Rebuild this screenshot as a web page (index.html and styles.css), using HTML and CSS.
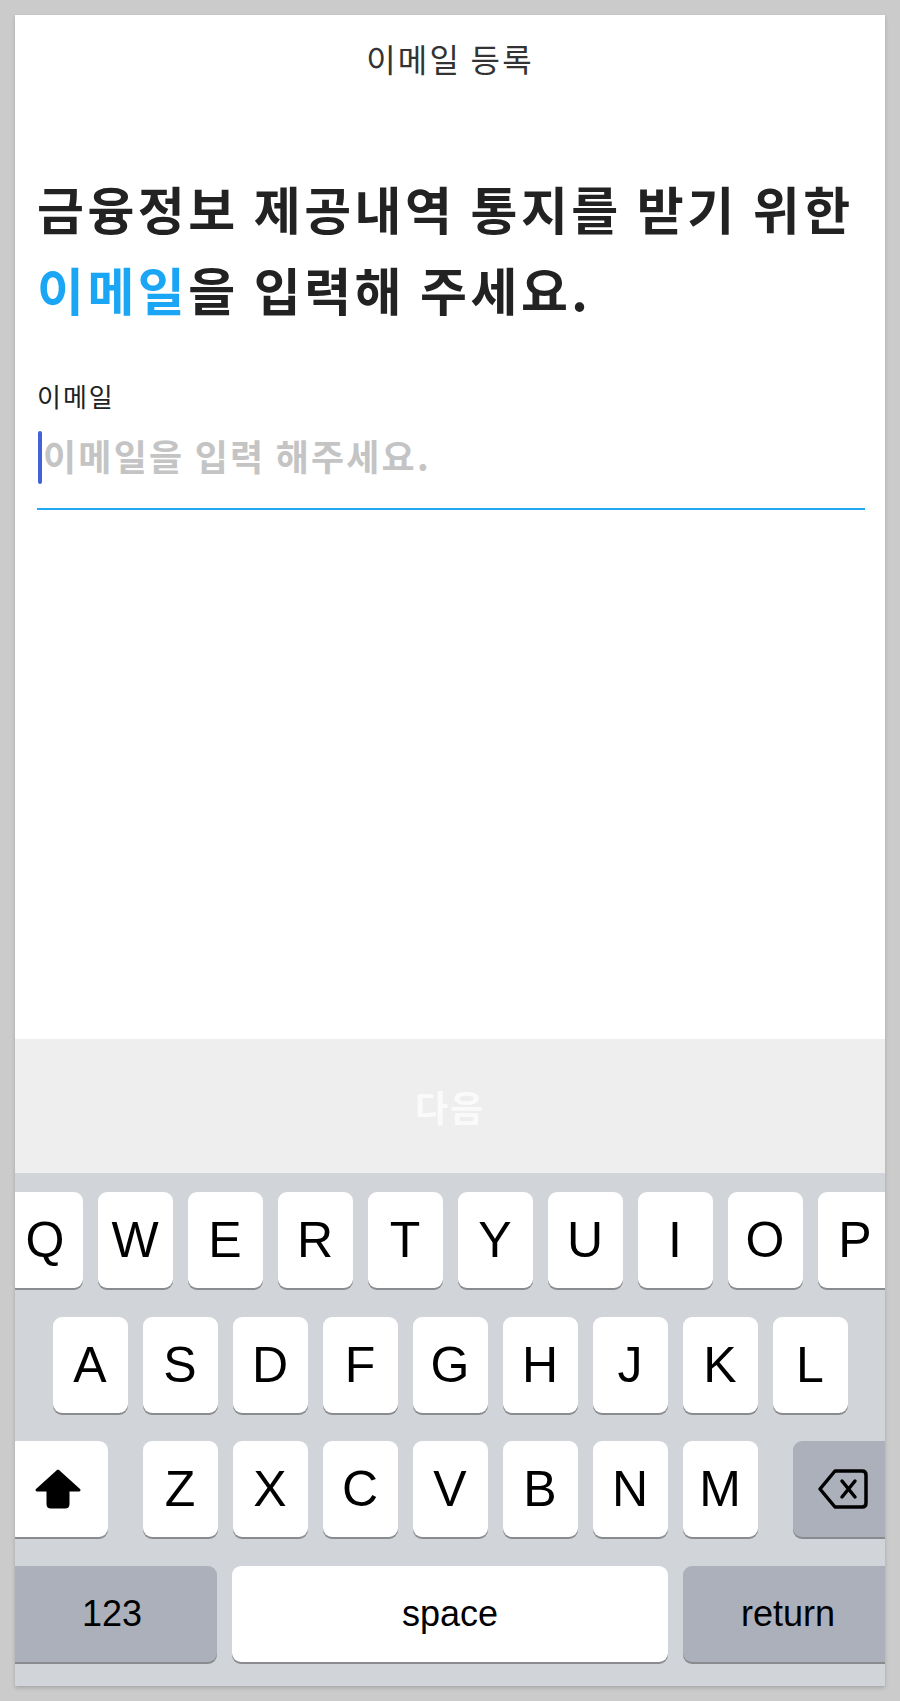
FILE: index.html
```html
<!DOCTYPE HTML>
<html>
    <head>
        <title>이메일 등록</title>
        <meta charset="utf-8">
        <link rel="stylesheet" href="styles.css">
    </head>

    <body>
        <div class="screen">
            <div class="topbar">이메일 등록</div>

            <div class="content">
                <h1 class="headline">금융정보 제공내역 통지를 받기 위한<br><span class="accent">이메일</span>을 입력해 주세요.</h1>

                <div class="field-label">이메일</div>
                <div class="field">
                    <span class="caret"></span>
                    <span class="placeholder">이메일을 입력 해주세요.</span>
                </div>
            </div>

            <div class="spacer"></div>

            <div class="next-bar">다음</div>

            <div class="keyboard">
                <div class="kb-row">
                    <div class="key">Q</div>
                    <div class="key">W</div>
                    <div class="key">E</div>
                    <div class="key">R</div>
                    <div class="key">T</div>
                    <div class="key">Y</div>
                    <div class="key">U</div>
                    <div class="key">I</div>
                    <div class="key">O</div>
                    <div class="key">P</div>
                </div>
                <div class="kb-row">
                    <div class="key">A</div>
                    <div class="key">S</div>
                    <div class="key">D</div>
                    <div class="key">F</div>
                    <div class="key">G</div>
                    <div class="key">H</div>
                    <div class="key">J</div>
                    <div class="key">K</div>
                    <div class="key">L</div>
                </div>
                <div class="kb-row">
                    <div class="key key-shift">
                        <svg width="48" height="42" viewBox="0 0 48 42">
                            <path d="M24 3 L3 22 L14 22 L14 36 Q14 39 17 39 L31 39 Q34 39 34 36 L34 22 L45 22 Z" fill="#000" stroke="#000" stroke-width="3" stroke-linejoin="round"/>
                        </svg>
                    </div>
                    <div class="key">Z</div>
                    <div class="key">X</div>
                    <div class="key">C</div>
                    <div class="key">V</div>
                    <div class="key">B</div>
                    <div class="key">N</div>
                    <div class="key">M</div>
                    <div class="key key-gray key-back">
                        <svg width="52" height="42" viewBox="0 0 52 42">
                            <path d="M18 3 L45 3 Q49 3 49 7 L49 35 Q49 39 45 39 L18 39 L3 21 Z" fill="none" stroke="#000" stroke-width="3.5" stroke-linejoin="round"/>
                            <path d="M25 13 L38 29 M38 13 L25 29" stroke="#000" stroke-width="3.5" stroke-linecap="round"/>
                        </svg>
                    </div>
                </div>
                <div class="kb-row">
                    <div class="key key-gray key-wide key-small">123</div>
                    <div class="key key-space key-small">space</div>
                    <div class="key key-gray key-wide key-small">return</div>
                </div>
            </div>
        </div>
    </body>
</html>
```

FILE: styles.css
```css
body {
    margin: 0;
    padding: 15px;
    background-color: #cbcbcb;
    font-family: "Noto Sans CJK KR", "Noto Sans", sans-serif;
}
.screen {
    height: 1671px;
    background-color: white;
    display: flex;
    flex-direction: column;
    overflow: hidden;
    box-shadow: 0 2px 4px rgba(0, 0, 0, 0.18);
}
.topbar {
    height: 86px;
    line-height: 86px;
    text-align: center;
    font-size: 32px;
    letter-spacing: 2.2px;
    color: #333;
}
.content {
    padding: 0 20px 0 22px;
}
.headline {
    margin: 67px 0 0;
    font-size: 51px;
    line-height: 81px;
    font-weight: 700;
    letter-spacing: 3.5px;
    color: #222;
}
.accent {
    color: #1ba6f5;
}
.field-label {
    margin-top: 48px;
    font-size: 26px;
    line-height: 36px;
    letter-spacing: 2px;
    color: #222;
}
.field {
    display: flex;
    align-items: center;
    padding: 17px 0 24px;
    border-bottom: 2px solid #20a8f4;
}
.caret {
    width: 4px;
    height: 53px;
    border-radius: 2px;
    background-color: #4262d8;
    margin-left: 1px;
}
.placeholder {
    margin-left: 1px;
    margin-bottom: 5px;
    font-size: 36px;
    font-weight: 700;
    letter-spacing: 2.2px;
    color: #c4c4c4;
    line-height: 48px;
}
.spacer {
    flex: 1;
}
.next-bar {
    height: 134px;
    background-color: #eeeeee;
    display: flex;
    align-items: center;
    justify-content: center;
    font-size: 36px;
    font-weight: 700;
    letter-spacing: 2px;
    color: #fafafa;
}
.keyboard {
    height: 513px;
    box-sizing: border-box;
    padding-top: 19px;
    background-color: #d1d4d9;
    display: flex;
    flex-direction: column;
    gap: 28.7px;
}
.kb-row {
    width: 886px;
    margin-left: -8px;
    display: flex;
    justify-content: center;
    gap: 15px;
}
.key {
    width: 75px;
    height: 96px;
    flex: none;
    background-color: white;
    border-radius: 9px;
    box-shadow: 0 2px 0 #8a8b8e;
    display: flex;
    align-items: center;
    justify-content: center;
    font-family: "Liberation Sans", Arial, sans-serif;
    font-size: 50px;
    color: #000;
}
.key-gray {
    background-color: #abb0ba;
}
.key-shift {
    width: 100px;
    margin-right: 20px;
}
.key-back {
    width: 100px;
    margin-left: 20px;
}
.key-wide {
    width: 210px;
}
.key-space {
    width: 436px;
}
.key-small {
    font-size: 36px;
}
```
